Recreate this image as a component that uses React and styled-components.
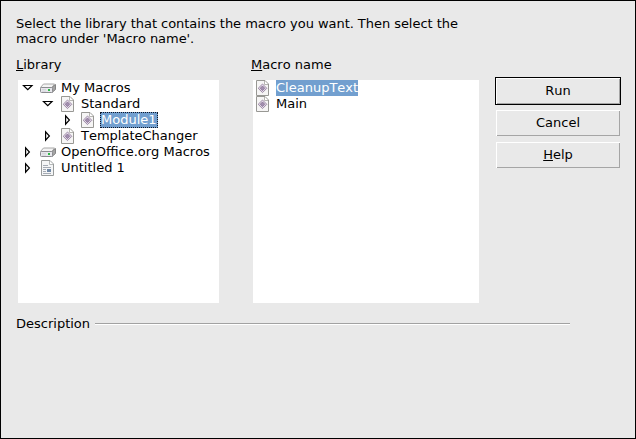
import React from "react";
import styled, { createGlobalStyle, css } from "styled-components";

const GlobalStyle = createGlobalStyle`
  * { box-sizing: border-box; }
  body { margin: 0; }
`;

const Dialog = styled.main`
  width: 636px;
  height: 439px;
  padding: 15px;
  border: 1px solid #000;
  background: #e9e9e9;
  color: #000;
  font: 13px/15px "DejaVu Sans", sans-serif;
  font-kerning: none;
  white-space: nowrap;
  cursor: default;
`;

const Intro = styled.p`
  width: 460px;
  margin: 0 0 11px;
  letter-spacing: -0.045px;
`;

const Columns = styled.div`
  display: grid;
  grid-template-columns: 203px 228px 126px;
  column-gap: 32px;
  height: 246px;
`;

const MacroColumn = styled.section`
  display: flex;
  flex-direction: column;
`;

const Label = styled.div`
  height: 23px;
`;

const List = styled.ul`
  width: ${(p) => p.$width}px;
  height: 223px;
  margin: 0 0 0 2px;
  padding: 0;
  list-style: none;
  background: #fff;
`;

const TreeRow = styled.li`
  display: flex;
  height: 16px;
  padding-left: ${(p) => 3 + p.$level * 20}px;
`;

const MacroRow = styled.li`
  display: flex;
  height: 16px;
  padding-left: 1px;
`;

const IconSlot = styled.span`
  flex: none;
  width: 22px;
  height: 16px;
  svg { display: block; }
`;

const ArrowSlot = styled(IconSlot)`
  width: 18px;
`;

const ItemText = styled.span`
  height: 16px;
  ${(p) => p.$selected && css`
    background: #729fcf;
    color: #fff;
  `}
  ${(p) => p.$focused && css`
    margin-left: -1px;
    padding: 0 1px;
    outline: 1px dotted #101828;
    outline-offset: -1px;
  `}
`;

const Mnemonic = styled.span`
  text-decoration: underline;
  text-decoration-thickness: 1px;
  text-underline-offset: 1px;
  text-decoration-skip-ink: none;
`;

const Buttons = styled.div`
  display: flex;
  flex-direction: column;
  gap: 6px;
  padding-top: 20px;
  margin-left: -16px;
  width: 126px;
`;

const Button = styled.button`
  width: ${(p) => (p.$primary ? 126 : 124)}px;
  height: ${(p) => (p.$primary ? 28 : 26)}px;
  margin: ${(p) => (p.$primary ? "0 0 -1px" : "0 0 0 1px")};
  padding: 0 0 1px;
  border: ${(p) => (p.$primary ? "1px solid #000" : "none")};
  background: #e9e9e9;
  box-shadow: inset 1px 1px #fff, inset -1px -1px #a5a5a5;
  color: #000;
  font: inherit;
  font-kerning: none;
`;

const Description = styled.div`
  display: flex;
  align-items: center;
  gap: 5px;
  width: 554px;
  margin-top: 13px;
`;

const Rule = styled.hr`
  flex: 1;
  height: 2px;
  margin: 0;
  border: 0;
  border-top: 1px solid #a2a2a2;
  border-bottom: 1px solid #fff;
`;

const Arrow = ({ open }) => (
  <svg width="14" height="16" aria-hidden="true">
    <path
      d={open ? "M2.5 5.5H11L6.75 9.7Z" : "M4.6 3.8V12.2L8.4 8Z"}
      fill="#fff" stroke="#000" strokeWidth="1.2"
    />
  </svg>
);

const DriveIcon = () => (
  <svg width="18" height="16" aria-hidden="true">
    <path d="M1.5 7.5L4.5 4H15.5L13 7.5Z" fill="#f4f4f4" stroke="#a8a8a8" />
    <path d="M13 7.5L16.5 4.5V9.5L13 12.5Z" fill="#a4a4a4" stroke="#858585" />
    <rect x="1.5" y="7.5" width="12" height="5" rx="1" fill="#e7e7ec" stroke="#8c8c91" />
    <path d="M3 9.5H7M3 11.2H7" stroke="#cfcfd5" strokeWidth=".7" />
    <path d="M9 9H11V11H9Z" fill="#30ba48" />
  </svg>
);

const ModuleIcon = () => (
  <svg width="17" height="16" aria-hidden="true">
    <path d="M2.5 .5H11L14.5 4V15.5H2.5Z" fill="#f6f5f5" stroke="#989894" />
    <path d="M10.5 1V4.5H14" fill="#fff" stroke="#b6b5b2" />
    <path d="M8.5 4L12.8 8.3L8.5 12.6L4.2 8.3Z" fill="#eee5f2" stroke="#927f9c" strokeWidth=".9" />
    <path d="M8.5 5.9L10.9 8.3L8.5 10.7L6.1 8.3Z" fill="#a28eaf" stroke="#6d5879" strokeWidth=".6" />
  </svg>
);

const DocumentIcon = () => (
  <svg width="17" height="16" aria-hidden="true">
    <path d="M2.5 .5H11L14.5 4V15.5H2.5Z" fill="#f5f6f7" stroke="#989b9b" />
    <path d="M10.5 1V4.5H14" fill="#fff" stroke="#b5b8b8" />
    <path d="M4 5.5H9M4 7.5H12M4 9.5H7M4 11.5H7M4 13.5H12" stroke="#a5abb4" />
    <rect x="8" y="9" width="4" height="3" fill="#7189a6" />
  </svg>
);

const icons = { drive: DriveIcon, module: ModuleIcon, document: DocumentIcon };

const library = [
  { name: "My Macros", level: 0, icon: "drive", open: true },
  { name: "Standard", level: 1, icon: "module", open: true },
  { name: "Module1", level: 2, icon: "module", selected: true },
  { name: "TemplateChanger", level: 1, icon: "module" },
  { name: "OpenOffice.org Macros", level: 0, icon: "drive" },
  { name: "Untitled 1", level: 0, icon: "document" },
];

export default function App() {
  return (
    <>
      <GlobalStyle />
      <Dialog>
        <Intro>
          Select the library that contains the macro you want. Then select the
          <br />
          macro under 'Macro name'.
        </Intro>
        <Columns>
          <MacroColumn>
            <Label><Mnemonic>L</Mnemonic>ibrary</Label>
            <List $width={201}>
              {library.map((item) => {
                const Icon = icons[item.icon];
                return (
                  <TreeRow key={item.name} $level={item.level}>
                    <ArrowSlot><Arrow open={item.open} /></ArrowSlot>
                    <IconSlot><Icon /></IconSlot>
                    <ItemText $selected={item.selected} $focused={item.selected}>{item.name}</ItemText>
                  </TreeRow>
                );
              })}
            </List>
          </MacroColumn>
          <MacroColumn>
            <Label><Mnemonic>M</Mnemonic>acro name</Label>
            <List $width={226}>
              {["CleanupText", "Main"].map((name, index) => (
                <MacroRow key={name}>
                  <IconSlot><ModuleIcon /></IconSlot>
                  <ItemText $selected={index === 0}>{name}</ItemText>
                </MacroRow>
              ))}
            </List>
          </MacroColumn>
          <Buttons>
            <Button $primary>Run</Button>
            <Button>Cancel</Button>
            <Button><Mnemonic>H</Mnemonic>elp</Button>
          </Buttons>
        </Columns>
        <Description>Description<Rule /></Description>
      </Dialog>
    </>
  );
}
